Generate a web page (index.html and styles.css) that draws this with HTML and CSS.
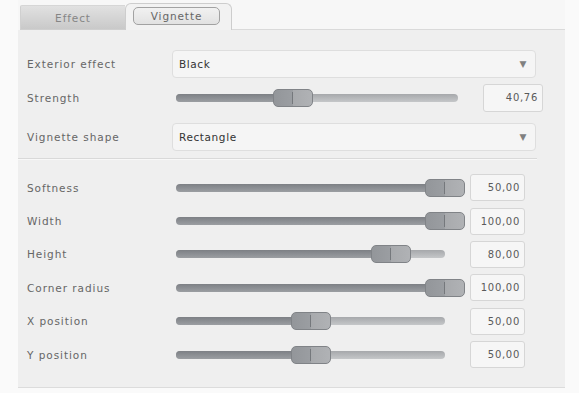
FILE: index.html
```html
<!DOCTYPE html>
<html lang="en">
<head>
  <meta charset="UTF-8" />
  <title>Vignette</title>
  <link rel="stylesheet" href="styles.css">
</head>
<body>
  <div class="wrap">
    <div class="tabs">
      <div class="tab">Effect</div>
      <div class="tab tab-active"><span class="tab-inner">Vignette</span></div>
      <div class="tab-rest"></div>
    </div>

    <div class="panel">
      <div class="row row-first">
        <label class="lbl">Exterior effect</label>
        <div class="select"><span>Black</span><span class="arrow">▼</span></div>
      </div>
      <div class="row row-strength">
        <label class="lbl">Strength</label>
        <div class="slider slider-wide">
          <div class="track"><div class="fill" style="width: 41%"></div></div>
          <div class="thumb" style="left: calc(41% - 19px)"></div>
        </div>
        <div class="num num-wide">40,76</div>
      </div>
      <div class="row row-shape">
        <label class="lbl">Vignette shape</label>
        <div class="select"><span>Rectangle</span><span class="arrow">▼</span></div>
      </div>
      <div class="sep"></div>

      <div class="sliders">
        <div class="row row-slider">
          <label class="lbl">Softness</label>
          <div class="slider">
            <div class="track"><div class="fill" style="width: 100%"></div></div>
            <div class="thumb" style="left: calc(100% - 20px)"></div>
          </div>
          <div class="num">50,00</div>
        </div>
        <div class="row row-slider">
          <label class="lbl">Width</label>
          <div class="slider">
            <div class="track"><div class="fill" style="width: 100%"></div></div>
            <div class="thumb" style="left: calc(100% - 20px)"></div>
          </div>
          <div class="num">100,00</div>
        </div>
        <div class="row row-slider">
          <label class="lbl">Height</label>
          <div class="slider">
            <div class="track"><div class="fill" style="width: 80%"></div></div>
            <div class="thumb" style="left: calc(80% - 20px)"></div>
          </div>
          <div class="num">80,00</div>
        </div>
        <div class="row row-slider">
          <label class="lbl">Corner radius</label>
          <div class="slider">
            <div class="track"><div class="fill" style="width: 100%"></div></div>
            <div class="thumb" style="left: calc(100% - 20px)"></div>
          </div>
          <div class="num">100,00</div>
        </div>
        <div class="row row-slider">
          <label class="lbl">X position</label>
          <div class="slider">
            <div class="track"><div class="fill" style="width: 50%"></div></div>
            <div class="thumb" style="left: calc(50% - 20px)"></div>
          </div>
          <div class="num">50,00</div>
        </div>
        <div class="row row-slider">
          <label class="lbl">Y position</label>
          <div class="slider">
            <div class="track"><div class="fill" style="width: 50%"></div></div>
            <div class="thumb" style="left: calc(50% - 20px)"></div>
          </div>
          <div class="num">50,00</div>
        </div>
      </div>
    </div>
  </div>
</body>
</html>
```

FILE: styles.css
```css
body {
  margin: 0;
  background-color: #fafafa;
  font-family: "DejaVu Sans", sans-serif;
  color: #5c5c5c;
}
.wrap {
  width: 547px;
  margin-left: 18px;
}
.tabs {
  display: flex;
  align-items: flex-end;
  height: 30px;
  padding-left: 2px;
  background-color: #f7f7f7;
}
.tab {
  box-sizing: border-box;
  width: 105px;
  height: 25px;
  display: flex;
  align-items: center;
  justify-content: center;
  font-size: 10.5px;
  letter-spacing: 0.9px;
  color: #858585;
  background: linear-gradient(#e1e1e1, #c9c9c9);
  border-top: 1px solid #d6d6d6;
  border-left: 1px solid #d0d0d0;
  border-bottom: 1px solid #cfcfcf;
  border-radius: 2px 0 0 0;
}
.tab-active {
  width: 107px;
  height: 27px;
  background: #f2f2f2;
  border: 1px solid #cdcdcd;
  border-bottom: none;
  border-radius: 6px 6px 0 0;
  padding-bottom: 2px;
}
.tab-inner {
  box-sizing: border-box;
  width: 87px;
  height: 18px;
  display: flex;
  align-items: center;
  justify-content: center;
  border: 1px solid #a2a2a2;
  border-radius: 5px;
  background: linear-gradient(#f1f1f1, #e2e2e2);
  color: #666;
  margin-left: -4px;
}
.tab-rest {
  flex: 1;
  height: 1px;
  background-color: #dadada;
}
.panel {
  background-color: #efefef;
  border-bottom: 1px solid #dcdcdc;
  padding-top: 18px;
  height: 339px;
}
.row {
  display: flex;
  align-items: center;
  padding-left: 9px;
}
.row-first {
  height: 31px;
}
.row-strength {
  height: 37px;
}
.row-shape {
  height: 42px;
}
.row-slider {
  height: 33.4px;
}
.lbl {
  width: 145px;
  flex-shrink: 0;
  font-size: 10.5px;
  letter-spacing: 0.95px;
  color: #666;
}
.select {
  box-sizing: border-box;
  width: 364px;
  height: 28px;
  display: flex;
  align-items: center;
  justify-content: space-between;
  padding: 0 8px 0 6px;
  background-color: #f5f5f5;
  border: 1px solid #dedede;
  border-radius: 4px;
  font-size: 10.5px;
  letter-spacing: 0.6px;
  color: #333;
}
.arrow {
  font-size: 9px;
  color: #808080;
}
.slider {
  position: relative;
  width: 269px;
  height: 20px;
  margin-left: 4px;
  flex-shrink: 0;
}
.slider-wide {
  width: 282px;
}
.track {
  position: absolute;
  left: 0;
  right: 0;
  top: 6px;
  height: 8px;
  border-radius: 4px;
  background: linear-gradient(#a6a8ab, #c5c7c9);
  overflow: hidden;
}
.fill {
  height: 100%;
  background: linear-gradient(#7d8085, #9b9ea2);
}
.thumb {
  position: absolute;
  top: 1px;
  box-sizing: border-box;
  width: 40px;
  height: 18px;
  border: 1px solid #808387;
  border-radius: 5px;
  background: linear-gradient(90deg, #93969a 0, #9b9ea2 50%, #a8aaad 50%, #b0b2b5 100%);
}
.thumb::after {
  content: "";
  position: absolute;
  left: 18px;
  top: 2px;
  bottom: 2px;
  width: 1px;
  background-color: #75787c;
}
.num {
  box-sizing: border-box;
  width: 55px;
  height: 27px;
  margin-left: 25px;
  display: flex;
  align-items: center;
  justify-content: flex-end;
  padding-right: 4px;
  background-color: #f6f6f6;
  border: 1px solid #d6d6d6;
  border-radius: 3px;
  font-size: 10px;
  letter-spacing: 0.7px;
  color: #5a5a5a;
}
.num-wide {
  width: 60px;
  height: 28px;
}
.sep {
  width: 519px;
  height: 1px;
  background-color: #d9d9d9;
  border-bottom: 1px solid #f8f8f8;
}
.sliders {
  padding-top: 11px;
}
```
